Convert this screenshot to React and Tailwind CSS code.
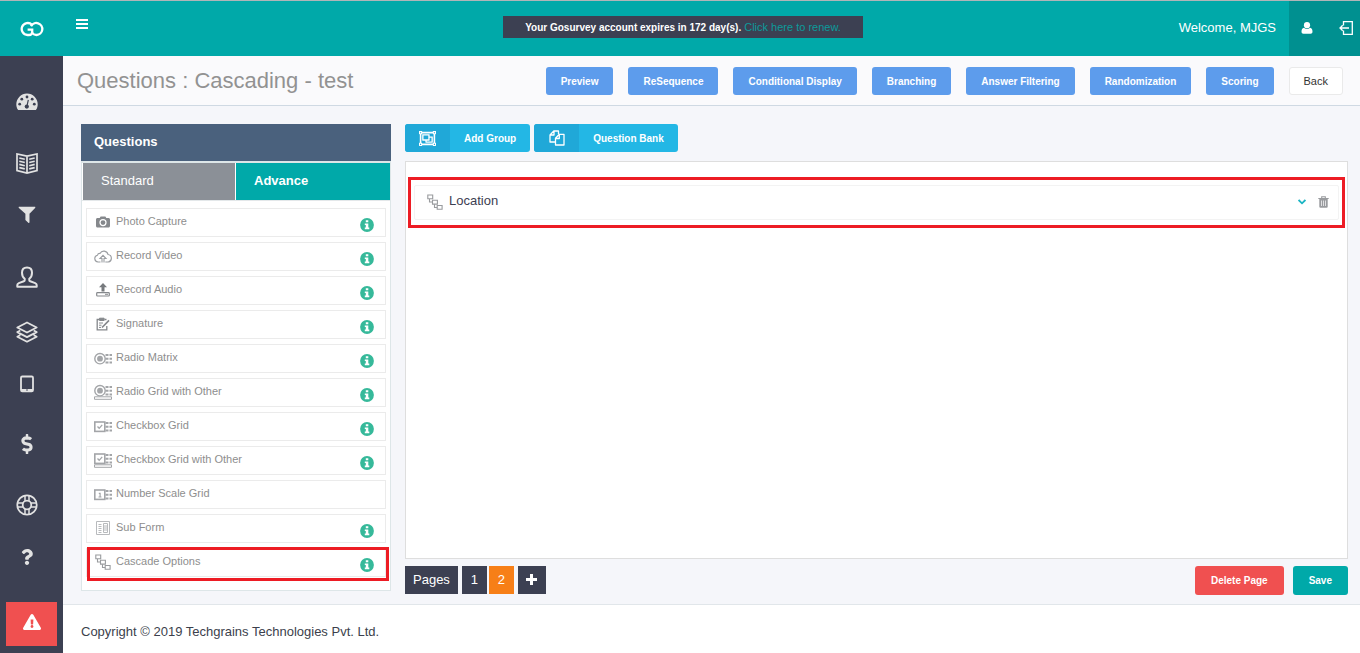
import React, { useState } from "react";
import { FaDollarSign, FaExclamationTriangle, FaQuestion, FaRegObjectGroup } from "react-icons/fa";

/* ---------- sidebar / header icons ---------- */

const Logo = () => (
  <svg width="24" height="16" viewBox="0 0 24 16" fill="none" stroke="#fff" strokeWidth="2.300">
    <path d="M12 3.800A6 6 0 1 0 7.500 14h1.500c2 0 3.200-1.200 3.200-3V8.600H7.600" />
    <path d="M11 5.200A6 6 0 1 1 16.500 14c-2 0-3.500-.9-4.500-2.500" />
  </svg>
);

const DashboardIcon = () => (
  <svg width="22" height="18" viewBox="0 0 22 18">
    <path d="M11 0.500A10.700 10.700 0 0 0 .3 11.200c0 2 .5 3.800 1.500 5.400.2.400.5.500.8.500h16.800c.300 0 .6-.1.8-.5 1-1.600 1.500-3.400 1.500-5.400A10.700 10.700 0 0 0 11 .500z" fill="currentColor" />
    <g fill="#3c4052">
      <circle cx="3.700" cy="11.200" r="1.400" />
      <circle cx="5.800" cy="6.200" r="1.400" />
      <circle cx="11" cy="4" r="1.400" />
      <circle cx="16.200" cy="6.200" r="1.400" />
      <circle cx="18.300" cy="11.200" r="1.400" />
      <circle cx="10.800" cy="13.600" r="2.100" />
    </g>
    <path d="M11 13l1.300-6.200" stroke="#3c4052" strokeWidth="1.200" />
  </svg>
);

const BookIcon = () => (
  <svg width="22" height="21" viewBox="0 0 22 21" fill="none" stroke="currentColor" strokeWidth="1.700">
    <path d="M11 3.200L1 1v16.500l10 2.500 10-2.500V1L11 3.200zM11 3.200V20" />
    <path d="M3.300 5l5.500 1.300M3.300 8.200l5.500 1.300M3.300 11.400l5.500 1.300M3.300 14.600l5.500 1.300M18.700 5l-5.500 1.300M18.700 8.200l-5.500 1.300M18.700 11.400l-5.500 1.300M18.700 14.600l-5.500 1.300" strokeWidth="1.600" />
  </svg>
);

const FilterIcon = () => (
  <svg width="18" height="18" viewBox="0 0 18 18" fill="currentColor">
    <path d="M1.300.800h15.400c.7 0 .9.700.4 1.200l-5.600 5.700v8.600c0 .7-.7.900-1.200.500l-2.900-2.700V7.700L.9 2c-.5-.5-.3-1.200.4-1.200z" />
  </svg>
);

const UserIcon = () => (
  <svg width="22" height="22" viewBox="0 0 22 22" fill="none" stroke="currentColor" strokeWidth="2" strokeLinejoin="round">
    <path d="M11 1.500c-3.200 0-5 2.300-5 5.300 0 2.500 1 4.700 2.700 6v1.400c0 .6-.3.900-.9 1.100l-5 1.800c-1 .4-1.500 1-1.500 2v1.700h19.400v-1.700c0-1-.5-1.600-1.500-2l-5-1.800c-.6-.2-.9-.5-.9-1.100v-1.400c1.700-1.300 2.700-3.500 2.700-6 0-3-1.800-5.300-5-5.300z" />
  </svg>
);

const LayersIcon = () => (
  <svg width="22" height="22" viewBox="0 0 22 22" fill="none" stroke="currentColor" strokeWidth="1.800" strokeLinejoin="round">
    <path d="M11 1.500L1.300 6.500l9.700 5 9.700-5z" />
    <path d="M4.300 9.500L1.300 11.100l9.700 5 9.700-5-3-1.600M4.300 14.100l-3 1.600 9.700 5 9.700-5-3-1.600" />
  </svg>
);

const TabletIcon = () => (
  <svg width="14" height="18" viewBox="0 0 14 18">
    <rect x="1" y="1.500" width="12" height="14.800" rx="1.300" fill="none" stroke="currentColor" strokeWidth="1.800" />
    <path d="M1 14h12v2H1z" fill="currentColor" />
    <circle cx="7" cy="15" r=".8" fill="#3c4052" />
  </svg>
);

const SupportIcon = () => (
  <svg width="22" height="22" viewBox="0 0 22 22" fill="none" stroke="currentColor" strokeWidth="1.800">
    <circle cx="11" cy="11" r="9.700" />
    <circle cx="11" cy="11" r="4.300" />
    <path d="M9 1.500v5.500M13 1.500v5.500M9 15v5.500M13 15v5.500M1.500 9h5.500M1.500 13h5.500M15 9h5.500M15 13h5.500" strokeWidth="1.500" />
  </svg>
);

const PersonIcon = () => (
  <svg width="12" height="12" viewBox="0 0 12 12" fill="#fff">
    <circle cx="6" cy="3.200" r="3.100" />
    <path d="M3 5.800C1.200 6 .5 7.600.5 9.800c0 1.300.7 2 1.900 2h7.200c1.200 0 1.900-.7 1.900-2 0-2.200-.7-3.800-2.500-4a4.200 4.200 0 0 1-6 0z" />
  </svg>
);

const LogoutIcon = () => (
  <svg width="14" height="14" viewBox="0 0 14 14" fill="none" stroke="#fff" strokeWidth="1.300">
    <path d="M4.500 4.500V.700h8.800v12.600H4.500V9.500" />
    <path d="M10 7H1M3.700 4.300L1 7l2.700 2.700" />
  </svg>
);

/* ---------- question type icons ---------- */

const CameraIcon = () => (
  <svg width="14" height="12" viewBox="0 0 14 12">
    <path d="M1.500 2h2.200L4.600.500h4.800l.9 1.500h2.200c.8 0 1.500.7 1.500 1.500v6.500c0 .8-.7 1.500-1.500 1.500h-11C.7 11.500 0 10.800 0 10V3.500C0 2.700.7 2 1.500 2z" fill="#85888c" />
    <circle cx="7" cy="6.600" r="3" fill="none" stroke="#fff" strokeWidth="1.200" />
  </svg>
);

const CloudIcon = () => (
  <svg width="18" height="13" viewBox="0 0 18 13" fill="none" stroke="#9a9da1" strokeWidth="1.100">
    <path d="M6.500 12H4A3.400 3.400 0 0 1 3.400 5.300 2.500 2.500 0 0 1 6 3.400 4.300 4.300 0 0 1 14 4.500a3.800 3.800 0 0 1 .3 7.500h-3" />
    <path d="M8 12.500V8.500H6L9 5.300l3 3.200h-2v4" />
  </svg>
);

const AudioIcon = () => (
  <svg width="14" height="14" viewBox="0 0 14 14">
    <path d="M7 0l4 4.200H8.500v4.300h-3V4.200H3z" fill="#777a7e" />
    <rect x=".7" y="9.700" width="12.600" height="3.300" rx=".8" fill="none" stroke="#85888c" strokeWidth="1.200" />
    <path d="M9 11.300h3" stroke="#85888c" />
  </svg>
);

const SignatureIcon = () => (
  <svg width="14" height="14" viewBox="0 0 14 14" fill="none" stroke="#85888c">
    <path d="M3 2.500H1.200v10.300h9.600V9M8.500 2.500h2" strokeWidth="1.300" />
    <path d="M3.500 1.200h4.600v2.300H3.500z" fill="#85888c" />
    <path d="M3 6h4M3 8.200h2.500M3 10.400h2" />
    <path d="M13 3.300L7.500 9l-1.500 1.500" strokeWidth="1.700" />
  </svg>
);

// option marker on the left, three rows of cells on the right
const GridIcon = ({ kind, other }) => (
  <svg width="18" height="16" viewBox={other ? "0 0 18 16" : "0 -2 18 16"} fill="none" stroke="#a3a5a8">
    {kind === "radio" ? (
      <>
        <circle cx="6" cy="6.700" r="5.200" strokeWidth="1.400" />
        <circle cx="6" cy="6.700" r="2.900" fill="#a3a5a8" stroke="none" />
      </>
    ) : (
      <rect x=".8" y="2" width="10" height="9.400" strokeWidth="1.600" />
    )}
    {kind === "check" && <path d="M3.500 6.500l1.700 1.800 3-3.500" strokeWidth="1.300" />}
    {kind === "number" && <path d="M4.800 5.300h1.300V9M4.500 9h3" strokeWidth="1.200" />}
    <path d="M11.500 3h3M15.500 3h2.500M11.500 6.700h3M15.500 6.700h2.500M11.500 10.400h3M15.500 10.400h2.500" strokeWidth="2" />
    {other && <path d="M.5 12.800h17v2.500H.5z" />}
  </svg>
);

const FormIcon = () => (
  <svg width="14" height="14" viewBox="0 0 14 14" fill="none" stroke="#b8babd">
    <path d="M.5.500h13v13H.5z" />
    <path d="M2.500 3.500h3M2.500 5.500h3M2.500 7.500h3M2.500 9.500h3M2.500 11.500h3" />
    <path d="M7.500 2.500h4v9h-4zM8 5h3M8 7h3M8 9h3" />
  </svg>
);

const CascadeIcon = () => (
  <svg width="16" height="16" viewBox="0 0 16 16" fill="none" stroke="#999b9e" strokeWidth="1.100">
    <path d="M.8 1h4.900v3.800H.8zM5.500 6.300h4.900v3.800H5.500zM10.200 11.500h4.900v3.800h-4.900z" />
    <path d="M2.500 5v3h3M7.500 10.200v3.300h2.700" />
  </svg>
);

const InfoIcon = () => (
  <svg width="14" height="14" viewBox="0 0 14 14">
    <circle cx="7" cy="7" r="6.900" fill="#36b99a" />
    <path d="M5.800 2.300h2.500v2H5.800zM4.800 5.400h3.500v4.200h1v1.700H4.800V9.600h1V7h-1z" fill="#fff" />
  </svg>
);

const CopyIcon = () => (
  <svg width="16" height="16" viewBox="0 0 16 16" fill="none" stroke="#fff" strokeWidth="1.300" strokeLinejoin="round">
    <path d="M6.500 12H1V5l3.800-4h4.700v3M5 1v4H1" />
    <path d="M10.300 4.300h4.700V15H6.500V8.200l3.800-3.900zM10.300 4.500v4H6.500" />
  </svg>
);

const TrashIcon = () => (
  <svg width="11" height="12" viewBox="0 0 11 12">
    <path d="M3.700 2V.700h3.600V2M.3 2.500h10.400" fill="none" stroke="#999b9e" strokeWidth="1.100" />
    <path d="M1.300 3h8.400v7.600c0 .8-.4 1.200-1 1.200H2.300c-.6 0-1-.4-1-1.200z" fill="#999b9e" />
    <path d="M3.500 4.500v5.500M5.500 4.500v5.500M7.500 4.500v5.500" stroke="#e8e8ea" strokeWidth=".9" />
  </svg>
);

const NAV = [
  { label: "Dashboard", icon: <DashboardIcon />, space: "mt-0" },
  { label: "Surveys", icon: <BookIcon />, space: "mt-[37px]" },
  { label: "Filters", icon: <FilterIcon />, space: "mt-7" },
  { label: "Users", icon: <UserIcon />, space: "mt-[38px]" },
  { label: "Layers", icon: <LayersIcon />, space: "mt-[31px]" },
  { label: "Devices", icon: <TabletIcon />, space: "mt-7" },
  { label: "Billing", icon: <FaDollarSign size={20} />, space: "mt-9" },
  { label: "Support", icon: <SupportIcon />, space: "mt-[37px]" },
  { label: "Help", icon: <FaQuestion size={16} />, space: "mt-7" },
];

const ACTIONS = [
  "Preview",
  "ReSequence",
  "Conditional Display",
  "Branching",
  "Answer Filtering",
  "Randomization",
  "Scoring",
];

const TYPES = [
  { name: "Photo Capture", icon: <CameraIcon />, info: true },
  { name: "Record Video", icon: <CloudIcon />, info: true },
  { name: "Record Audio", icon: <AudioIcon />, info: true },
  { name: "Signature", icon: <SignatureIcon />, info: true },
  { name: "Radio Matrix", icon: <GridIcon kind="radio" />, info: true },
  { name: "Radio Grid with Other", icon: <GridIcon kind="radio" other />, info: true },
  { name: "Checkbox Grid", icon: <GridIcon kind="check" />, info: true },
  { name: "Checkbox Grid with Other", icon: <GridIcon kind="check" other />, info: true },
  { name: "Number Scale Grid", icon: <GridIcon kind="number" />, info: false },
  { name: "Sub Form", icon: <FormIcon />, info: true },
  { name: "Cascade Options", icon: <CascadeIcon />, info: true, marked: true },
];

const Header = () => (
  <header className="flex h-14 border-t border-[#b0b5b8] bg-[#00a9a9] text-white">
    <div className="flex flex-1">
      <a href="#" aria-label="Home" className="flex w-[63px] items-center justify-center">
        <Logo />
      </a>
      <button aria-label="Toggle menu" className="mt-[18px] ml-[13px] flex h-[10px] w-3 flex-col justify-between">
        <span className="h-0.5 w-full bg-white" />
        <span className="h-0.5 w-full bg-white" />
        <span className="h-0.5 w-full bg-white" />
      </button>
    </div>
    <p className="mt-[15px] ml-1.5 h-[22px] w-[360px] bg-[#3c4052] text-center text-[11px] leading-[22px]">
      <span className="text-[10px] font-bold">Your Gosurvey account expires in 172 day(s).</span>{" "}
      <a href="#" className="text-[#0c9b9b]">
        Click here to renew.
      </a>
    </p>
    <div className="flex flex-1 items-center justify-end">
      <span className="pr-[13px] pb-0.5 text-[13px]">Welcome, MJGS</span>
      <div className="flex h-full items-center gap-[26px] bg-[#009090] pr-[7px] pb-0.5 pl-3">
        <button aria-label="Profile"><PersonIcon /></button>
        <button aria-label="Log out"><LogoutIcon /></button>
      </div>
    </div>
  </header>
);

const Sidebar = () => (
  <nav className="flex w-[63px] shrink-0 flex-col items-center bg-[#3c4052] pt-[34px] text-[#e2e2e2]">
    {NAV.map((n) => (
      <a key={n.label} href="#" aria-label={n.label} className={`flex h-6 w-full items-center justify-center pr-[9px] ${n.space}`}>
        {n.icon}
      </a>
    ))}
    <a href="#" aria-label="Alerts" className="mt-[33px] flex h-11 w-[51px] items-center justify-center bg-[#f05050] pb-1 text-white">
      <FaExclamationTriangle size={18} />
    </a>
  </nav>
);

const QuestionPanel = () => {
  const [tab, setTab] = useState("Advance");
  const tabClass = (name) =>
    name === tab ? "bg-[#00a9a9] font-bold" : "bg-[#8b9097]";

  return (
    <section className="w-[310px] shrink-0">
      <h2 className="h-[37px] bg-[#4a617d] pl-[13px] text-[13px] leading-[35px] font-bold text-white">
        Questions
      </h2>
      <div className="h-[430px] border border-t-2 border-[#dde6e8] bg-white">
        <div className="grid grid-cols-[152px_1fr] gap-px border-b border-[#e4e8ea] pl-px text-[13px] text-white">
          {["Standard", "Advance"].map((name) => (
            <button
              key={name}
              onClick={() => setTab(name)}
              className={`h-[37px] pb-0.5 pl-[18px] text-left ${tabClass(name)}`}
            >
              {name}
            </button>
          ))}
        </div>
        <ul className="flex flex-col gap-[5px] px-1 pt-[7px]">
          {TYPES.map((t) => (
            <li key={t.name} className="relative flex h-[29px] items-start border border-[#ebebeb] pl-[7px] text-[11px] text-[#8e8e8e]">
              <span className="flex h-[26px] w-[18px] items-center justify-center">{t.icon}</span>
              <span className="flex-1 pl-1 leading-6">{t.name}</span>
              {t.info && (
                <span className="mt-[9px] mr-[11px]">
                  <InfoIcon />
                </span>
              )}
              {t.marked && <span className="absolute -top-0.5 -right-1 -bottom-[5px] left-0 border-3 border-[#ed1c24]" />}
            </li>
          ))}
        </ul>
      </div>
    </section>
  );
};

const Canvas = () => (
  <section className="flex min-w-0 flex-1 flex-col">
    <div className="flex gap-1 text-[10px] font-bold text-white">
      <button className="flex h-7 items-center overflow-hidden rounded-[3px] bg-[#23b7e5]">
        <span className="flex h-full w-[45px] items-center justify-center bg-[#20a8d8]"><FaRegObjectGroup size={17} /></span>
        <span className="px-[14px]">Add Group</span>
      </button>
      <button className="flex h-7 items-center overflow-hidden rounded-[3px] bg-[#23b7e5]">
        <span className="flex h-full w-[45px] items-center justify-center bg-[#20a8d8]"><CopyIcon /></span>
        <span className="px-[14px]">Question Bank</span>
      </button>
    </div>

    <div className="mt-[9px] h-[398px] border border-[#dedede] bg-white px-[2px] pt-[15px]">
      <div className="border-3 border-[#ed1c24] px-[3px] py-[5px]">
        <div className="flex h-[35px] items-center rounded-xs border border-[#f3f3f3] pr-[9px] pb-0.5 pl-3">
          <CascadeIcon />
          <span className="flex-1 pb-0.5 pl-[6px] text-[13px] text-[#3c4052]">Location</span>
          <button aria-label="Expand" className="mr-3">
            <svg width="8" height="6" viewBox="0 0 8 6" fill="none" stroke="#1cb5c4" strokeWidth="1.800">
              <path d="M.6 1L4 4.300 7.400 1" />
            </svg>
          </button>
          <button aria-label="Delete question"><TrashIcon /></button>
        </div>
      </div>
    </div>

    <div className="mt-[7px] flex items-start text-[13px] text-white">
      <span className="h-7 bg-[#3c4052] px-2 leading-7">Pages</span>
      <button className="ml-1 h-7 w-[25px] bg-[#3c4052]">1</button>
      <button className="ml-0.5 h-7 w-[25px] bg-[#f77f17]">2</button>
      <button aria-label="Add page" className="ml-1 flex h-7 w-7 items-center justify-center bg-[#3c4052] pb-0.5">
        <svg width="11" height="11" viewBox="0 0 11 11" stroke="#fff" strokeWidth="3">
          <path d="M5.500 0v11M0 5.500h11" />
        </svg>
      </button>
      <div className="ml-auto flex gap-[9px] text-[10px] font-bold">
        <button className="h-[29px] rounded-[3px] bg-[#f05050] px-4">Delete Page</button>
        <button className="h-[29px] rounded-[3px] bg-[#00a9a9] px-4">Save</button>
      </div>
    </div>
  </section>
);

export default function App() {
  return (
    <div className="flex min-h-screen flex-col bg-[#f5f6fa] font-['Liberation_Sans',Arial,sans-serif]">
      <Header />
      <div className="flex flex-1">
        <Sidebar />
        <div className="flex min-w-0 flex-1 flex-col">
          <div className="flex h-[50px] items-center justify-between border-b border-[#cfd9e3] bg-[#fafafc] pr-[17px] pl-[14px]">
            <h1 className="text-[22px] text-[#929292]">Questions : Cascading - test</h1>
            <div className="flex gap-[15px]">
              {ACTIONS.map((a) => (
                <button key={a} className="h-7 rounded-[3px] bg-[#5d9cec] px-[15px] pt-0.5 text-[10px] font-bold text-white">
                  {a}
                </button>
              ))}
              <button className="h-7 rounded-[3px] border border-[#eaeaea] bg-white px-[14px] pt-0.5 text-[11px] text-[#333]">Back</button>
            </div>
          </div>
          <main className="flex items-start gap-[14px] px-[18px] pt-[18px] pb-[9px] pr-3">
            <QuestionPanel />
            <Canvas />
          </main>
          <footer className="flex-1 border-t border-[#e1e6ea] bg-white px-[18px] text-[13px] leading-[53px] text-[#3c3f4c]">
            Copyright © 2019 Techgrains Technologies Pvt. Ltd.
          </footer>
        </div>
      </div>
    </div>
  );
}
